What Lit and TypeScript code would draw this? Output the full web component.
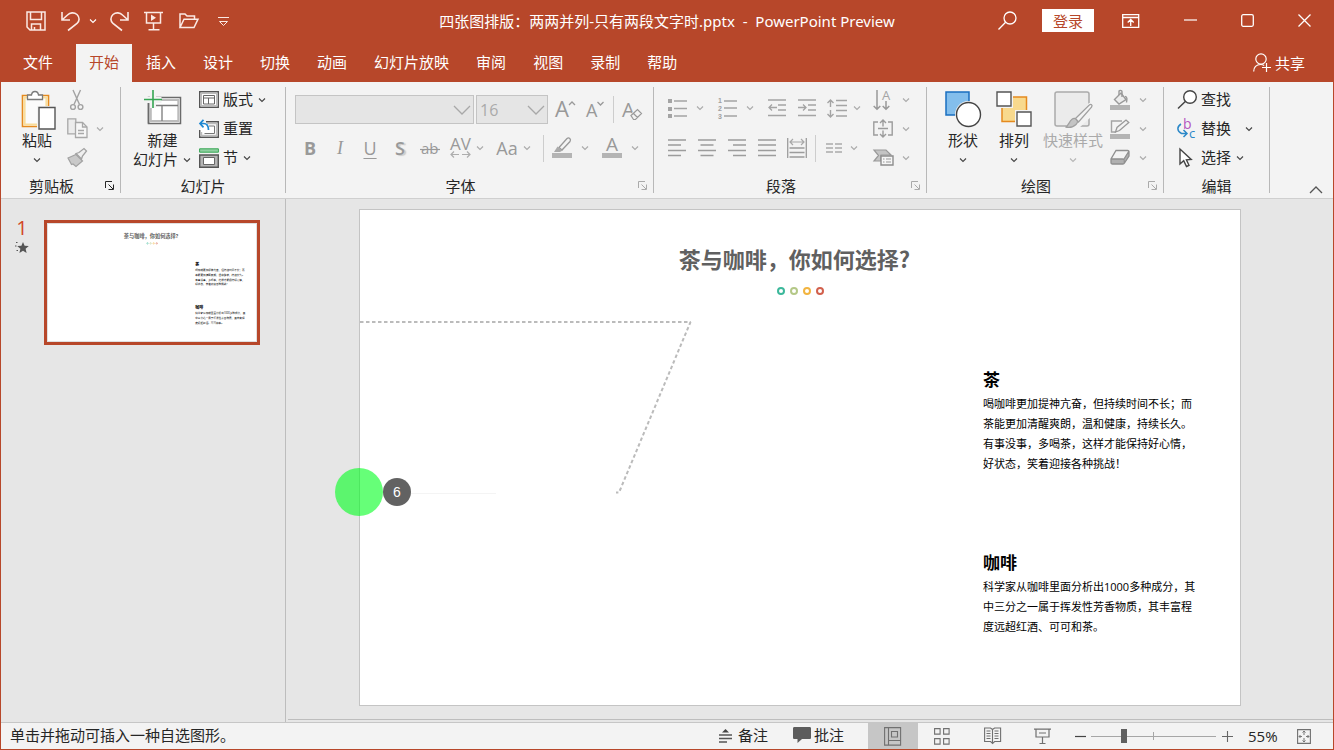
import { LitElement, html, css, svg, nothing, type SVGTemplateResult, type TemplateResult } from "lit";
import { customElement, state } from "lit/decorators.js";

type Art = SVGTemplateResult;

const icon = (w: number, h: number, art: Art) =>
  html`<svg class="icon" width=${w} height=${h} viewBox="0 0 ${w} ${h}" fill="none" aria-hidden="true">${art}</svg>`;

const chevron = html`<svg class="chevron" width="10" height="10" viewBox="0 0 10 10" fill="none" aria-hidden="true">
  <path d="M2 3.500l3 3 3-3" stroke="currentColor" stroke-width="1.100" />
</svg>`;

/* ---- title bar ---- */
const save = svg`<g stroke="#fbe9e4" stroke-width="1.500"><path d="M1 1h18v18H4l-3-3z"/><path d="M4.500 1v7.500h11V1M5.500 19v-6h9v6M8.500 19v-3"/></g>`;
const undo = svg`<path d="M1 1v8h8M1.500 8.500L6.500 4C9 1.500 13 1 16 3.500c3 2.800 2.600 6.500 0 9L7 19.500" stroke="#fbe9e4" stroke-width="1.600"/>`;
const redo = svg`<path transform="matrix(-1 0 0 1 19 0)" d="M1 1v8h8M1.500 8.500L6.500 4C9 1.500 13 1 16 3.500c3 2.800 2.600 6.500 0 9L7 19.500" stroke="#fbe9e4" stroke-width="1.600"/>`;
const present = svg`<g stroke="#fbe9e4" stroke-width="1.500"><path d="M0 1.500h19M2.500 1.500v10.500h14V1.500M9.500 12v6.500M4.500 18.800h11"/></g><path d="M7 3.500v6.500l5-3.200z" fill="#fbe9e4"/>`;
const folder = svg`<path d="M1 14.500V1h5l2 2h7.500v3M1 14.500L5 6.200h14l-4 8.300z" stroke="#fbe9e4" stroke-width="1.500"/>`;
const customize = svg`<path d="M0 .5h11M1.500 4.500h8l-4 4z" stroke="#fbe9e4"/>`;
const search = svg`<circle cx="12" cy="7" r="6" stroke="#fff" stroke-width="1.300"/><path d="M7.600 11.300L.5 18.500" stroke="#fff" stroke-width="1.300"/>`;
const ribbonMode = svg`<path d="M.7 .7h16v12.600H.7zM.7 3.500h16M8.700 12V6M5.700 8.500l3-3 3 3" stroke="#fff" stroke-width="1.300"/>`;
const minimize = svg`<path d="M0 6h13" stroke="#fff" stroke-width="1.200"/>`;
const maximize = svg`<rect x=".7" y=".7" width="11.600" height="11.600" rx="1.500" stroke="#fff" stroke-width="1.300"/>`;
const closeArt = svg`<path d="M.5 .5l12 12M12.500 .5l-12 12" stroke="#fff" stroke-width="1.300"/>`;
const share = svg`<g stroke="#fff" stroke-width="1.200"><circle cx="8" cy="6" r="5.200"/><path d="M.7 18.500c0-4.200 2.500-7 7-7 1.500 0 2.600.4 3.500 1M13.500 10v9M9 14.500h9"/></g>`;

/* ---- clipboard and slides ---- */
const paste = svg`<g transform="translate(4 0)"><path d="M1.500 4.500h26v31h-26z" fill="#fbfbfb" stroke="#e58a1f" stroke-width="1.600"/>
  <path d="M3.500 6.500h22v27h-22z" stroke="#f9dd9a" stroke-width="2.200"/>
  <path d="M6.500 8.500V4h4c.3-2.500 1.800-3.500 3.500-3.500s3.200 1 3.500 3.500h4v4.500z" fill="#fff" stroke="#7a7a7a" stroke-width="1.300"/>
  <path d="M16 15h19v24H16z" fill="#f3f3f3"/><path d="M18 16.500h16V38H18z" fill="#fff" stroke="#555" stroke-width="1.400"/></g>`;
const cut = svg`<g stroke="#a2a2a2" stroke-width="1.400"><path d="M6 0l6.500 14.500M13.500 0L7 14.500"/><circle cx="6" cy="17" r="2.400"/><circle cx="13.500" cy="17" r="2.400"/></g>`;
const copy = svg`<g stroke="#a8a8a8" stroke-width="1.300"><path d="M.8 .8h8v15h-8z" fill="#ececec"/><path d="M8.500 4.500h7l4.500 4.500v10.500H8.500z" fill="#f6f6f6"/><path d="M15.500 4.500V9H20M11 12.500h6M11 15.500h6"/></g>`;
const brush = svg`<path d="M1 10l8-3.500 6.500 6.500L9 18.500 6 16l-1.500.500z" fill="#c9c9c9" stroke="#a2a2a2" stroke-width="1.200"/><path d="M9 5.500l3-1 5-4 2.500 2.500-4 5-1 3z" fill="#efefef" stroke="#a2a2a2" stroke-width="1.300"/>`;
const newSlide = svg`<path d="M4.500 6.500h32v26h-32z" fill="#fff" stroke="#6a6a6a" stroke-width="1.500"/><path d="M6.800 9h27.500v21H6.800z" stroke="#bcbcbc" stroke-width="2"/>
  <path d="M7 14.500h27M18 14.500V30" stroke="#7a7a7a" stroke-width="1.300"/><path d="M0 6h17.500V12H0zM6 0h6v17H6z" fill="#f3f3f3"/><path d="M0 8.500h18M9 -1v18" stroke="#35a653" stroke-width="1.600"/>
  <path d="M4.500 12v20.500" stroke="#6a6a6a" stroke-width="1.500"/>`;
const layout = svg`<path d="M.7 .7h18.600v15.600H.7z" fill="#fff" stroke="#555" stroke-width="1.400"/><path d="M2.300 2.300h15.400v12.400H2.300z" stroke="#bbb" stroke-width="1.400"/><path d="M4.500 4.500h11v8.500h-11zM4.500 7h11M9.500 7v6" stroke="#666"/>`;
const resetArt = svg`<path d="M7 2.700h12.300v15.600H.7V11" fill="#fff" stroke="#555" stroke-width="1.400"/><path d="M8 4.500h9.600v12H2.500V13" stroke="#bbb" stroke-width="1.400"/><path d="M10 7h5.500v7.500h-10" stroke="#777"/><path d="M4.500 .8L1 4.500l3.500 3.800M1.500 4.500h3C8 4.500 9.500 7 9.500 11" stroke="#1e88d2" stroke-width="1.700"/>`;
const section = svg`<path d="M.6 .8h18.800v3.400H.6z" fill="#8fcfa0" stroke="#35a653"/><path d="M.7 7h18.600v12.300H.7z" fill="#b4b4b4" stroke="#555" stroke-width="1.400"/><path d="M4.500 9.500h11v7h-11z" fill="#fff" stroke="#666"/>`;

/* ---- font ---- */
const growFont = svg`<text x="0" y="18" font-size="22" fill="#999">A</text><path d="M14 6l3-3 3 3" stroke="#999" stroke-width="1.300"/>`;
const shrinkFont = svg`<text x="0" y="18" font-size="18" fill="#999">A</text><path d="M11.500 3l3 3 3-3" stroke="#999" stroke-width="1.300"/>`;
const clearFont = svg`<text x="0" y="17" font-size="20" fill="#999">A</text><path d="M9 15l7-6 4 4-6.500 6.500h-2z" fill="#f3f3f3" stroke="#f3f3f3" stroke-width="2"/><path d="M9 15.500l6.500-6 4 4-6 6h-2zM11.500 13.500l4 4" stroke="#999" stroke-width="1.200"/>`;
const strike = svg`<text x="1" y="15" font-size="15" fill="#999">ab</text><path d="M0 10.500h20" stroke="#999" stroke-width="1.200"/>`;
const kerning = svg`<text x="0" y="13" font-size="17" fill="#999">AV</text><path d="M1 17.500h8M12 17.500h8M4 14.500l-3 3 3 3M17 14.500l3 3-3 3" stroke="#adadad" stroke-width="1.200"/>`;
const highlight = svg`<path d="M7 10.500L15 1.500c2-1.500 4.500.5 3 3L10 13z" fill="#f3f3f3" stroke="#999" stroke-width="1.300"/><path d="M5.500 9.500l5 4-2.500 1.500H2z" fill="#aaa"/><path d="M0 16h20v5H0z" fill="#b4b4b4"/>`;
const fontColor = svg`<text x="4" y="14" font-size="19" fill="#999">A</text><path d="M0 16h20v5H0z" fill="#b4b4b4"/>`;

/* ---- paragraph ---- */
const bullets = svg`<path d="M0 0h4v4H0zM0 8h4v4H0zM0 15h4v4H0z" fill="#a4a4a4"/><path d="M6 2h13M6 9.500h13M6 17h13" stroke="#a4a4a4" stroke-width="1.400"/>`;
const numbering = svg`<g class="digits" font-size="7" font-weight="700" fill="#a0a0a0"><text x="0" y="5">1</text><text x="0" y="13">2</text><text x="0" y="21">3</text></g><path d="M6 3h13M6 10h13M6 18h13" stroke="#a4a4a4" stroke-width="1.400"/>`;
const outdent = svg`<path d="M0 1h18M10 6h8M10 11h8M0 16.500h18" stroke="#a4a4a4" stroke-width="1.400"/><path d="M1 8.500h8M4 5.500l-3 3 3 3" stroke="#a4a4a4" stroke-width="1.300"/>`;
const indent = svg`<path d="M0 1h18M10 6h8M10 11h8M0 16.500h18" stroke="#a4a4a4" stroke-width="1.400"/><path d="M0 8.500h7.500M5 5.500l3 3-3 3" stroke="#a4a4a4" stroke-width="1.300"/>`;
const spacing = svg`<path d="M9 1.500h11M9 6.500h11M9 11.500h11M9 17h11M3.500 1v7M3.500 11v7M.5 4l3-3 3 3M.5 15l3 3 3-3" stroke="#a4a4a4" stroke-width="1.400"/>`;
const alignLeft = svg`<path d="M0 1h18M0 6h13M0 11.500h18M0 16.500h13" stroke="#9c9c9c" stroke-width="1.400"/>`;
const alignCenter = svg`<path d="M0 1h18M2.500 6h13M0 11.500h18M2.500 16.500h13" stroke="#9c9c9c" stroke-width="1.400"/>`;
const alignRight = svg`<path d="M0 1h18M5 6h13M0 11.500h18M5 16.500h13" stroke="#9c9c9c" stroke-width="1.400"/>`;
const justify = svg`<path d="M0 1h18M0 6h18M0 11.500h18M0 16.500h18" stroke="#9c9c9c" stroke-width="1.400"/>`;
const distribute = svg`<path d="M.7 0v20M19.300 0v20M2.500 10h15M2.500 14.500h15M2.500 19h15" stroke="#9c9c9c" stroke-width="1.300"/><path d="M3 4h14M6 1L3 4l3 3M14 1l3 3-3 3" stroke="#a8a8a8" stroke-width="1.200"/>`;
const columns = svg`<path d="M0 1h7M9 1h7M0 5h7M9 5h7M0 9h7M9 9h7" stroke="#ababab" stroke-width="1.300"/>`;
const direction = svg`<text x="9" y="10" font-size="13" fill="#a4a4a4">A</text><path d="M4 0v19M13 11v8M.7 16L4 19.300 7.300 16M9.700 16l3.300 3.300 3.300-3.300" stroke="#999" stroke-width="1.500"/>`;
const alignText = svg`<path d="M5 3H.8v13H5M15 3h4.200v13H15M5 9.500h10M10 1v6.500M10 11.500V18M7 4l3-3 3 3M7 15l3 3 3-3" stroke="#9c9c9c" stroke-width="1.400"/>`;
const smartArt = svg`<path d="M1 1h12l5 5H8v6H1l4.500-5.500z" fill="#c4c4c4" stroke="#999" stroke-width="1.200"/><path d="M8 7h12v9H8z" fill="#f6f6f6" stroke="#8d8d8d" stroke-width="1.400"/><path d="M10 10h1.500M10 13h1.500M13 10h5M13 13h5" stroke="#999"/>`;

/* ---- drawing ---- */
const shapes = svg`<path d="M1 1h23v23H1z" fill="#83beec" stroke="#1a6fc0" stroke-width="1.500"/><circle cx="23.500" cy="23.500" r="13.500" fill="#f3f3f3"/><circle cx="23.500" cy="23.500" r="12" fill="#fff" stroke="#444" stroke-width="1.400"/>`;
const arrange = svg`<path d="M6 6h24.500v24.500H6z" fill="#f8d98d" stroke="#e58a1f" stroke-width="1.500"/><path d="M0 0h17v17H0zM19 19h17v17H19z" fill="#f3f3f3"/><path d="M1 1h14v14H1zM21 21h14v14H21z" fill="#fff" stroke="#555" stroke-width="1.400"/>`;
const quickStyle = svg`<rect x="2" y="1" width="34" height="34" rx="2" fill="#ebebeb" stroke="#ababab" stroke-width="1.500"/><path d="M11 36.500c4-1 4-10 11-9L35 13c3-2 4-1 4 0v12L26 37z" fill="#f3f3f3"/><path d="M12.500 36c4-1 4-9.500 9.500-8.500 3.500 1 3 4 1 6s-6 3.500-10.500 2.500z" fill="#c4c4c4" stroke="#a0a0a0" stroke-width="1.300"/><path d="M22.500 27.500L36 14.200c2-1.500 4-.5 2.500 2L25.500 31z" fill="#f3f3f3" stroke="#a0a0a0" stroke-width="1.300"/>`;
const fillArt = svg`<path d="M4.500 9.500L11 3l5 6.500-7 4.500z" fill="#ececec" stroke="#999" stroke-width="1.400"/><path d="M9 5V1.500c0-1.500 3-1.500 3 0V7M15 6.500c2.500 0 2 3 1.500 6" stroke="#999" stroke-width="1.400"/><path d="M0 15h20v5H0z" fill="#b4b4b4"/>`;
const outlineArt = svg`<path d="M12 2H1.500v11H6" stroke="#a4a4a4" stroke-width="1.400"/><path d="M5.500 13l1.500-4.500L16 1l2.800 2.500L9.500 11.500z" fill="#f3f3f3" stroke="#999" stroke-width="1.300"/><path d="M0 15h20v5H0z" fill="#b4b4b4"/>`;
const effects = svg`<path d="M6.500 1.500H18c1 0 1.300.7 1 1.500L15 10H1z" fill="#f3f3f3"/><path d="M1 10h12.500v5H1zM14 10l5-8v5.500L14 15z" fill="#b0b0b0"/><path d="M6 1.500h11.500c1.200 0 1.700.6 1.500 1.500v4l-4.500 7c-.5.800-1 1-1.500 1H2.500c-1 0-1.500-.5-1.500-1.500V10zM1 10h11.500c1 0 1.500.3 1.500 1v4M14 10l5-8" stroke="#8f8f8f" stroke-width="1.300"/>`;

/* ---- editing ---- */
const find = svg`<circle cx="13" cy="7" r="6.300" fill="#fff" stroke="#444" stroke-width="1.400"/><path d="M8.300 11.500L1 18.500" stroke="#444" stroke-width="1.500"/>`;
const replace = svg`<text x="6" y="11" font-size="14" fill="#b455c0">b</text><text x="12" y="20" font-size="13" fill="#2b88c8">c</text><path d="M4 6C0 8.500-.5 13 4.500 15.500H9M6.500 12l3.500 3.500L6.500 19" stroke="#2b88c8" stroke-width="1.500"/>`;
const select = svg`<path d="M3 1v15l3.700-3.300L9.500 18.500l2.500-1.200-2.600-5.500 4.800-.3z" fill="#fff" stroke="#444" stroke-width="1.400"/>`;
const launcher = svg`<path d="M.5 7V.5H7M3.500 3.500L8 8M8.500 3.500v5h-5" stroke="currentColor"/>`;
const collapse = svg`<path d="M1 7l6-6 6 6" stroke="#555" stroke-width="1.300"/>`;

/* ---- status bar ---- */
const notes = svg`<path d="M3 4.500L6.500 1 10 4.500z" fill="#444"/><path d="M0 7h13M0 10.500h13M0 14h8" stroke="#555" stroke-width="1.300"/>`;
const comments = svg`<path d="M1.500 0h15c1 0 1.500.5 1.500 1.500v9c0 1-.5 1.500-1.500 1.500H9l-4.500 4V12h-3C.5 12 0 11.500 0 10.500v-9C0 .5.500 0 1.500 0z" fill="#5c5c5c"/>`;
const viewNormal = svg`<path d="M.6 .6h16v17.500H.6zM4.500 .6v17.500M4.500 13.500h12M7.500 4.500h6v5.500h-6z" stroke="#707070" stroke-width="1.100"/>`;
const viewGrid = svg`<path d="M.6 .6h5.500v5.500H.6zM9.600 .6h5.500v5.500H9.600zM.6 10.600h5.500v5.500H.6zM9.600 10.600h5.500v5.500H9.600z" stroke="#707070" stroke-width="1.100"/>`;
const viewRead = svg`<path d="M8.500 2.500L6.500 1H.6v13.500h6l2 2 2-2h6V1h-6zM8.500 2.500v14M2.500 4h4M2.500 6.500h4M2.500 9h4M2.500 11.500h4M10.500 4h4M10.500 6.500h4M10.500 9h4M10.500 11.500h4" stroke="#707070" stroke-width="1.100"/>`;
const viewShow = svg`<path d="M0 1.200h17M2 1.200V9h13V1.200M5 5h7M8.500 9v6M5.500 15.500h6" stroke="#707070" stroke-width="1.200"/>`;
const minus = svg`<path d="M0 5.500h11" stroke="#444" stroke-width="1.200"/>`;
const plus = svg`<path d="M0 5.500h11M5.500 0v11" stroke="#666" stroke-width="1.100"/>`;
const fit = svg`<path d="M.6 .6h12.800v13.800H.6z" stroke="#707070" stroke-width="1.100"/><path d="M7 2v4M5.500 3.500L7 2l1.500 1.500M7 13V9M5.500 11.500L7 13l1.500-1.500M2 7.500h3M3.500 6L2 7.500 3.500 9M12 7.500H9M10.500 6L12 7.500 10.500 9" stroke="#777"/>`;
const star = svg`<path d="M8 1l1.600 3.800 4.200.3-3.200 2.700 1 4.200L8 9.800 4.400 12l1-4.200L2.200 5.100l4.200-.3z" fill="#555"/><path d="M1 1.500h1.500M0 5h1.500M1.500 9.500H3" stroke="#555"/>`;

const TABS = ["开始", "插入", "设计", "切换", "动画", "幻灯片放映", "审阅", "视图", "录制", "帮助"];
const DOTS = ["#3cb89b", "#b4c887", "#f2b440", "#d2604c"];
const TITLE = "茶与咖啡，你如何选择?";
const SECTIONS = [
  {
    head: "茶",
    top: 177,
    lines: ["喝咖啡更加提神亢奋，但持续时间不长；而", "茶能更加清醒爽朗，温和健康，持续长久。", "有事没事，多喝茶，这样才能保持好心情，", "好状态，笑着迎接各种挑战！"],
  },
  {
    head: "咖啡",
    top: 359,
    lines: ["科学家从咖啡里面分析出1000多种成分，其", "中三分之一属于挥发性芳香物质，其丰富程", "度远超红酒、可可和茶。"],
  },
];

@customElement("app-root")
export class AppRoot extends LitElement {
  @state() private tab = "开始";
  @state() private zoomLevel = 25;

  static styles = css`
    :host {
      display: flex;
      flex-direction: column;
      box-sizing: border-box;
      height: 100vh;
      border: 1px solid #b7472a;
      background: #e6e6e6;
      color: #262626;
      font: 15px/20px "Open Sans", "Noto Sans CJK SC", sans-serif;
      overflow: hidden;
    }
    *, *::before, *::after { box-sizing: border-box; }
    button, select, input { font: inherit; color: inherit; background: none; border: 0; margin: 0; padding: 0; }
    svg { display: block; flex: none; overflow: visible; }
    svg text { font-family: "Open Sans", "Noto Sans CJK SC", sans-serif; }
    svg .digits text { font-family: "Liberation Sans", sans-serif; }
    button { display: flex; align-items: center; justify-content: center; white-space: nowrap; }

    .titlebar { flex: none; display: grid; grid-template-columns: 1fr auto 1fr; align-items: center; height: 43px; padding-bottom: 4px; background: #b7472a; color: #fff; }
    .quick { display: flex; align-items: center; gap: 15px; padding-left: 25px; }
    .quick .undo { gap: 7px; margin-right: -3px; }
    .quick .more { margin-left: 4px; }
    .doc { white-space: pre; font-family: "Noto Sans", "Noto Sans CJK SC", sans-serif; }
    .window { display: flex; align-items: center; justify-content: flex-end; padding-right: 22px; gap: 44px; }
    .account { display: flex; align-items: center; gap: 25px; margin-right: -16px; }
    .login { width: 52px; height: 23px; background: #fff; color: #b7472a; }

    .tabs { flex: none; display: flex; height: 38px; gap: 1px; background: #b7472a; color: #fff; }
    .tab { padding: 0 13px 2px; }
    .tab.file { margin: 0 9px; }
    .tab.active { background: #f3f3f3; color: #b7472a; }
    .share { margin-left: auto; margin-right: 28px; gap: 3px; }

    .ribbon { flex: none; display: flex; background: #f3f3f3; border-bottom: 1px solid #cfcfcf; }
    .group { display: flex; flex-direction: column; padding-top: 3px; }
    .divider { width: 1px; margin: 5px 0; background: #b8b8b8; }
    .body { display: flex; height: 88px; }
    .caption { display: flex; align-items: center; height: 25px; }
    .caption .name { flex: 1; text-align: center; }
    .caption button { width: 18px; padding-right: 4px; }
    .off { color: #aaa; }
    .pad-paste { padding: 0 15px 0 14px; gap: 8px; }
    .pad-slides { padding: 0 18px 0 12px; gap: 7px; }
    .pad-font { padding: 10px 6px 0 9px; flex-direction: column; gap: 9px; }
    .pad-para { padding: 0 15px 0 8px; gap: 11px; }
    .pad-draw { padding: 0 15px 0 14px; gap: 7px; }
    .pad-edit { padding: 0 15px 0 13px; }
    .big { flex-direction: column; justify-content: flex-start; padding-top: 6px; min-width: 44px; line-height: 19px; }
    .big .art { display: flex; height: 40px; }
    .big .low { display: flex; align-items: center; justify-content: center; height: 19px; gap: 4px; }
    .stack { display: grid; grid-template-rows: repeat(3, 29px); justify-items: start; }
    .small { gap: 4px; }
    .small .slot { display: flex; justify-content: center; width: 20px; }
    .small .label { padding-bottom: 2px; }
    .small.far .chevron { margin-left: 9px; }
    .small .chevron, .big .chevron { opacity: 0.85; }
    .mini { gap: 7px; }
    .mini .slot { display: flex; width: 21px; }
    .row { display: flex; align-items: center; height: 30px; }
    .row.first { height: 29px; }
    .rows { display: flex; flex-direction: column; gap: 10px; padding-top: 8px; }
    .cell { width: 30px; height: 30px; color: #999; font-size: 18px; }
    .bold { font-weight: 700; }
    .italic { font: italic 18px "Liberation Serif", serif; }
    .under { text-decoration: underline; text-underline-offset: 3px; }
    .shadow { font-weight: 600; text-shadow: 2px 1px 1px #ccc; }
    .split { display: flex; align-items: center; color: #aaa; }
    .split.wide { gap: 3px; }
    .split + .split, .split + .cell { margin-left: 7px; }
    .tight { margin-left: 0; }
    .rule { width: 1px; height: 27px; margin: 0 3px; background: #cdcdcd; }
    .rule.far { margin-left: 11px; }
    .combo { display: flex; align-items: center; height: 29px; color: #aaa; position: relative; margin-right: 2px; }
    .combo.family { width: 179px; }
    .combo.size { width: 72px; }
    .combo select { width: 100%; height: 100%; padding-left: 3px; appearance: none; border: 1px solid #c4c4c4; background: #e5e5e5; font-size: 16px; opacity: 1; }
    .combo svg { position: absolute; right: 3px; top: 10px; }
    .fold { margin: 0 9px 2px auto; align-self: flex-end; width: 16px; height: 12px; }

    .work { flex: 1; display: flex; min-height: 0; border-bottom: 1px solid #c6c6c6; }
    .pane { flex: none; display: flex; align-items: flex-start; gap: 15px; width: 285px; padding: 21px 25px 0 14px; border-right: 1px solid #bdbdbd; }
    .marks { display: flex; flex-direction: column; align-items: center; gap: 5px; color: #d24726; font-size: 20px; line-height: 16px; }
    .thumb { display: block; flex: 1; border: 3px solid #b7472a; background: #fff; }
    .thumb svg { width: 100%; height: auto; border: 1px solid #e0e0e0; }
    .stage { flex: 1; display: flex; margin: 0 0 2px 2px; padding: 10px 92px 13px 71px; border-bottom: 1px solid #bdbdbd; }
    .slide { flex: 1; position: relative; display: flex; flex-direction: column; background: #fff; border: 1px solid #c4c4c4; color: #000; }
    .slide h1 { margin: 32px 11px 0 0; text-align: center; font-size: 22px; line-height: 32px; font-weight: 700; color: #606060; font-family: "Noto Sans CJK SC", sans-serif; }
    .dots { display: flex; justify-content: center; gap: 5px; margin-top: 13px; }
    .dot { width: 8px; height: 8px; border: 2px solid; border-radius: 50%; }
    .texts { width: 217px; margin: 71px 40px 0 auto; display: flex; flex-direction: column; gap: 75px; }
    .texts h2 { margin: 0 0 2px; font-size: 17px; line-height: 26px; font-family: "Noto Sans CJK SC", sans-serif; }
    .texts p { margin: 0; font-size: 11px; line-height: 20px; }
    .guide { position: absolute; left: 0; top: 0; }
    .touch { position: absolute; left: -25px; top: 258px; display: flex; align-items: center; }
    .ring { width: 48px; height: 48px; border-radius: 50%; background: rgba(0, 255, 30, 0.6); }
    .count { width: 28px; height: 28px; border-radius: 50%; background: #626262; color: #fff; font: 14px/28px "Liberation Sans", sans-serif; text-align: center; }

    .status { flex: none; display: flex; align-items: stretch; height: 26px; padding: 0 22px 0 9px; background: #f3f3f3; line-height: 24px; }
    .hint { margin-right: auto; }
    .note { gap: 6px; margin-right: 25px; padding-bottom: 2px; }
    .comment { gap: 3px; margin-right: 24px; padding-bottom: 2px; }
    .view { width: 50px; padding-right: 2px; }
    .view.active { background: #c6c6c6; }
    .step { width: 20px; }
    .minus { margin-left: 2px; }
    .zoom { display: flex; align-items: center; }
    .zoom input { appearance: none; width: 125px; height: 16px; margin: 0 1px; background: linear-gradient(#a6a6a6, #a6a6a6) center / 100% 1px no-repeat, linear-gradient(#a6a6a6, #a6a6a6) center / 1px 8px no-repeat; }
    .zoom input::-webkit-slider-thumb { appearance: none; width: 6px; height: 14px; background: #606060; }
    .percent { width: 49px; margin-left: 11px; justify-content: flex-start; }
  `;

  private group(name: string, cls: string, body: TemplateResult, launch: "" | "on" | "off" = "") {
    return html`<section class="group" aria-label=${name}>
        <div class="body ${cls}">${body}</div>
        <div class="caption">
          <span class="name">${name}</span>
          ${launch ? html`<button class=${launch} aria-label="${name}设置">${icon(9, 9, launcher)}</button>` : nothing}
        </div>
      </section>
      <div class="divider"></div>`;
  }

  private big(label: string, art: TemplateResult, low: TemplateResult, off = false) {
    return html`<button class="big ${off ? "off" : ""}">
      <span class="art">${art}</span><span>${label}</span><span class="low">${low}</span>
    </button>`;
  }

  private small(label: string, art: TemplateResult, drop = true, far = false) {
    return html`<button class="small ${far ? "far" : ""}">
      <span class="slot">${art}</span><span class="label">${label}</span>${drop ? chevron : nothing}
    </button>`;
  }

  private mini(label: string, art: TemplateResult, drop = true) {
    return html`<button class="mini off" aria-label=${label}><span class="slot">${art}</span>${drop ? chevron : nothing}</button>`;
  }

  private cell(label: string, content: unknown, cls = "") {
    return html`<button class="cell ${cls}" aria-label=${label}>${content}</button>`;
  }

  private split(label: string, content: unknown, cls = "") {
    return html`<span class="split ${cls}">${this.cell(label, content)}${chevron}</span>`;
  }

  private thumbnail() {
    return html`<svg viewBox="0 0 880 495" aria-hidden="true">
      <text x="436" y="59" text-anchor="middle" font-size="22" font-weight="700" fill="#606060">${TITLE}</text>
      ${DOTS.map((c, i) => svg`<circle cx=${421 + i * 13} cy="82" r="3" fill="none" stroke=${c} stroke-width="2"/>`)}
      ${SECTIONS.map(
        (s) => svg`<text x="623" y=${s.top} font-size="17" font-weight="700">${s.head}</text>
          ${s.lines.map((l, i) => svg`<text x="623" y=${s.top + 23 + i * 20} font-size="11">${l}</text>`)}`,
      )}
    </svg>`;
  }

  render() {
    const caret = html`<svg width="18" height="10" viewBox="0 0 18 10" fill="none"><path d="M1 1l8 8 8-8" stroke="#a8a8a8" stroke-width="1.300" /></svg>`;
    return html`
      <header class="titlebar">
        <div class="quick">
          <button aria-label="保存">${icon(20, 20, save)}</button>
          <button class="undo" aria-label="撤消">${icon(20, 20, undo)}${chevron}</button>
          <button aria-label="恢复">${icon(19, 20, redo)}</button>
          <button aria-label="从头开始">${icon(20, 20, present)}</button>
          <button aria-label="打开">${icon(20, 16, folder)}</button>
          <button class="more" aria-label="自定义快速访问工具栏">${icon(11, 7, customize)}</button>
        </div>
        <div class="doc">四张图排版：两两并列-只有两段文字时.pptx  -  PowerPoint Preview</div>
        <div class="window">
          <div class="account">
            <button aria-label="搜索">${icon(19, 19, search)}</button>
            <button class="login">登录</button>
          </div>
          <button aria-label="功能区显示选项">${icon(18, 14, ribbonMode)}</button>
          <button aria-label="最小化">${icon(13, 13, minimize)}</button>
          <button aria-label="最大化">${icon(13, 13, maximize)}</button>
          <button aria-label="关闭">${icon(13, 13, closeArt)}</button>
        </div>
      </header>

      <nav class="tabs">
        <button class="tab file">文件</button>
        ${TABS.map((t) => html`<button class="tab ${t === this.tab ? "active" : ""}" @click=${() => (this.tab = t)}>${t}</button>`)}
        <button class="share">${icon(19, 20, share)}共享</button>
      </nav>

      <div class="ribbon">
        ${this.group(
          "剪贴板",
          "pad-paste",
          html`${this.big("粘贴", icon(40, 40, paste), chevron)}
            <div class="stack">
              ${this.mini("剪切", icon(21, 20, cut), false)}${this.mini("复制", icon(21, 21, copy))}${this.mini("格式刷", icon(21, 20, brush), false)}
            </div>`,
          "on",
        )}
        ${this.group(
          "幻灯片",
          "pad-slides",
          html`${this.big("新建", icon(38, 40, newSlide), html`幻灯片${chevron}`)}
            <div class="stack">
              ${this.small("版式", icon(20, 17, layout))}${this.small("重置", icon(20, 19, resetArt), false)}${this.small("节", icon(20, 20, section))}
            </div>`,
        )}
        ${this.group(
          "字体",
          "pad-font",
          html`<div class="row first">
              <label class="combo family"><select disabled aria-label="字体"><option></option></select>${caret}</label>
              <label class="combo size"><select disabled aria-label="字号"><option>16</option></select>${caret}</label>
              ${this.cell("增大字号", icon(21, 22, growFont))}${this.cell("减小字号", icon(18, 22, shrinkFont))}
              <span class="rule"></span>${this.cell("清除格式", icon(20, 20, clearFont))}
            </div>
            <div class="row">
              ${this.cell("加粗", "B", "bold")}${this.cell("倾斜", "I", "italic")}${this.cell("下划线", "U", "under")}${this.cell("阴影", "S", "shadow")}
              ${this.cell("删除线", icon(20, 18, strike))}${this.split("字符间距", icon(21, 22, kerning))}${this.split("更改大小写", "Aa")}
              <span class="rule far"></span>${this.split("突出显示", icon(20, 22, highlight), "wide")}${this.split("字体颜色", icon(20, 22, fontColor), "wide")}
            </div>`,
          "off",
        )}
        ${this.group(
          "段落",
          "pad-para",
          html`<div class="rows">
              <div class="row">
                ${this.split("项目符号", icon(19, 19, bullets), "wide")}${this.split("编号", icon(19, 20, numbering), "wide")}
                ${this.cell("减少缩进", icon(18, 18, outdent))}${this.cell("增加缩进", icon(18, 18, indent))}${this.split("行距", icon(20, 19, spacing), "tight")}
              </div>
              <div class="row">
                ${this.cell("左对齐", icon(18, 18, alignLeft))}${this.cell("居中", icon(18, 18, alignCenter))}${this.cell("右对齐", icon(18, 18, alignRight))}
                ${this.cell("两端对齐", icon(18, 18, justify))}${this.cell("分散对齐", icon(20, 20, distribute))}
                <span class="rule"></span>${this.split("分栏", icon(16, 10, columns))}
              </div>
            </div>
            <div class="stack">
              ${this.mini("文字方向", icon(20, 20, direction))}${this.mini("对齐文本", icon(20, 19, alignText))}${this.mini("转换为 SmartArt", icon(21, 17, smartArt))}
            </div>`,
          "off",
        )}
        ${this.group(
          "绘图",
          "pad-draw",
          html`${this.big("形状", icon(36, 40, shapes), chevron)}${this.big("排列", icon(36, 40, arrange), chevron)}${this.big("快速样式", icon(40, 40, quickStyle), chevron, true)}
            <div class="stack">
              ${this.mini("形状填充", icon(20, 20, fillArt))}${this.mini("形状轮廓", icon(20, 20, outlineArt))}${this.mini("形状效果", icon(20, 17, effects))}
            </div>`,
          "off",
        )}
        ${this.group(
          "编辑",
          "pad-edit",
          html`<div class="stack">
            ${this.small("查找", icon(20, 20, find), false)}${this.small("替换", icon(20, 21, replace), true, true)}${this.small("选择", icon(20, 20, select))}
          </div>`,
        )}
        <button class="fold" aria-label="折叠功能区">${icon(14, 8, collapse)}</button>
      </div>

      <main class="work">
        <aside class="pane">
          <div class="marks"><span>1</span>${icon(14, 14, star)}</div>
          <button class="thumb" aria-label="幻灯片 1">${this.thumbnail()}</button>
        </aside>
        <div class="stage">
          <article class="slide">
            <h1>${TITLE}</h1>
            <div class="dots">${DOTS.map((c) => html`<span class="dot" style="border-color:${c}"></span>`)}</div>
            <div class="texts">
              ${SECTIONS.map((s) => html`<section><h2>${s.head}</h2><p>${s.lines.join("")}</p></section>`)}
            </div>
            <svg class="guide" width="340" height="300" viewBox="0 0 340 300" fill="none" aria-hidden="true">
              <path d="M0 112H330.500L259 282.500h-3" stroke="#bbb" stroke-width="2" stroke-linejoin="bevel" stroke-dasharray="3.500 2.500" />
              <path d="M50 283.500h86" stroke="#f4f4f4" />
            </svg>
            <div class="touch"><span class="ring"></span><span class="count">6</span></div>
          </article>
        </div>
      </main>

      <footer class="status">
        <span class="hint">单击并拖动可插入一种自选图形。</span>
        <button class="note">${icon(13, 15, notes)}备注</button>
        <button class="comment">${icon(18, 16, comments)}批注</button>
        <button class="view active" aria-label="普通视图">${icon(17, 19, viewNormal)}</button>
        <button class="view" aria-label="幻灯片浏览">${icon(16, 17, viewGrid)}</button>
        <button class="view" aria-label="阅读视图">${icon(17, 18, viewRead)}</button>
        <button class="view" aria-label="幻灯片放映">${icon(17, 17, viewShow)}</button>
        <div class="zoom">
          <button class="step minus" aria-label="缩小" @click=${() => (this.zoomLevel = Math.max(0, this.zoomLevel - 5))}>${icon(11, 11, minus)}</button>
          <input type="range" aria-label="缩放" min="0" max="100" .value=${String(this.zoomLevel)} />
          <button class="step" aria-label="放大" @click=${() => (this.zoomLevel = Math.min(100, this.zoomLevel + 5))}>${icon(11, 11, plus)}</button>
        </div>
        <button class="percent">55%</button>
        <button aria-label="适应窗口">${icon(14, 15, fit)}</button>
      </footer>
    `;
  }
}
